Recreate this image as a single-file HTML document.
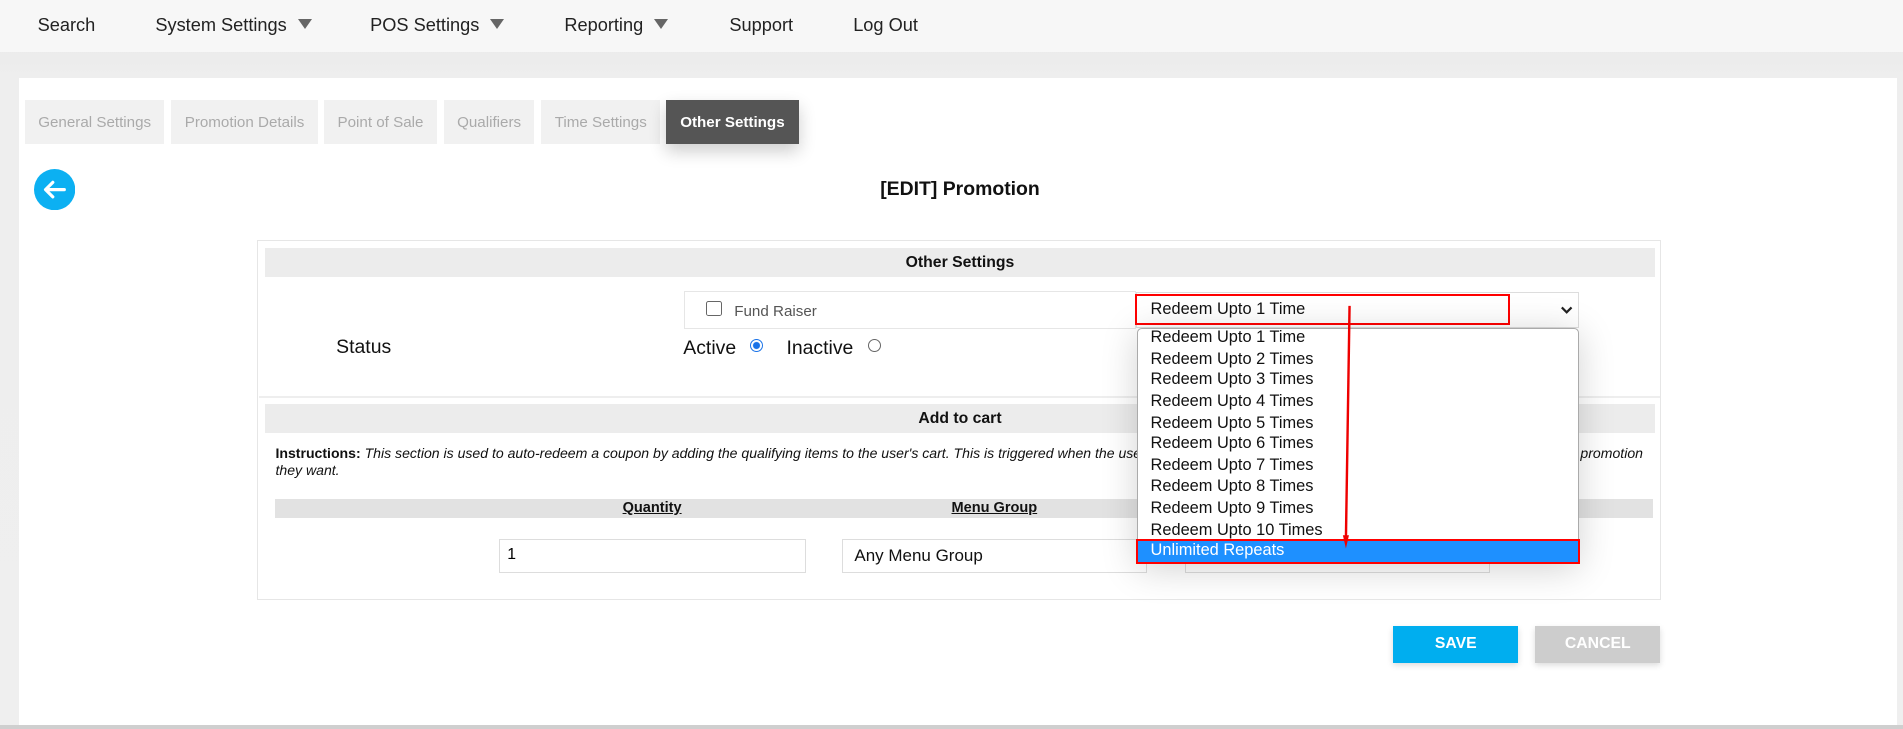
<!DOCTYPE html>
<html><head><meta charset="utf-8"><style>
html,body{margin:0;padding:0;}
body{width:1903px;height:729px;overflow:hidden;background:#ccc;font-family:"Liberation Sans",Arial,sans-serif;}
#w{position:relative;width:1568px;height:601px;zoom:1.21365;background:linear-gradient(#e6e6e6,#eeeeee 64px,#efefef);overflow:hidden;}
.a{position:absolute;white-space:nowrap;}
.nav{position:absolute;left:0;top:0;width:1568px;height:43px;background:#f7f7f7;}
.nav .a{font-size:15px;color:#222;top:12px;}
.tri{display:inline-block;width:0;height:0;border-left:6px solid transparent;border-right:6px solid transparent;border-top:9px solid #666;margin-left:9px;vertical-align:1px;}
.panel{position:absolute;left:16px;top:64px;width:1547px;height:533px;background:#fff;}
.tab{position:absolute;top:82px;height:37px;background:#f1f1f1;color:#aaa;font-size:12.5px;line-height:38px;text-align:center;}
.hdr{position:absolute;background:#ececec;font-weight:bold;font-size:13px;text-align:center;line-height:24px;color:#111;}
.opt{position:absolute;left:948px;font-size:13.5px;color:#111;}
.inp{position:absolute;border:1px solid #ddd;background:#fff;box-sizing:border-box;}
</style></head><body><div id="w">
<div class="nav">
<span class="a" style="left:31px">Search</span>
<span class="a" style="left:128px">System Settings<span class="tri"></span></span>
<span class="a" style="left:305px">POS Settings<span class="tri"></span></span>
<span class="a" style="left:465px">Reporting<span class="tri"></span></span>
<span class="a" style="left:601px">Support</span>
<span class="a" style="left:703px">Log Out</span>
</div>
<div class="panel"></div>
<div style="position:absolute;left:0;top:597px;width:1568px;height:4px;background:#cfcfcf"></div>
<div class="tab" style="left:21px;width:114px">General Settings</div>
<div class="tab" style="left:141px;width:121px">Promotion Details</div>
<div class="tab" style="left:267px;width:93px">Point of Sale</div>
<div class="tab" style="left:366px;width:74px">Qualifiers</div>
<div class="tab" style="left:446px;width:98px">Time Settings</div>
<div class="tab" style="left:549px;width:109px;background:#555;color:#fff;font-weight:bold;box-shadow:0 6px 14px rgba(0,0,0,.2)">Other Settings</div>
<svg class="a" style="left:28px;top:139px" width="34" height="34" viewBox="0 0 34 34"><circle cx="17" cy="17" r="17" fill="#0cb0f2"/><path d="M25 17H10M15.5 11l-6 6 6 6" stroke="#fff" stroke-width="2.6" fill="none" stroke-linecap="round" stroke-linejoin="round"/></svg>
<div class="a" style="left:0;width:1582px;text-align:center;top:147px;font-weight:bold;font-size:16px;color:#111">[EDIT] Promotion</div>
<div style="position:absolute;left:212px;top:198px;width:1155px;height:295px;border:1px solid #e6e6e6;background:#fff"></div>
<div class="hdr" style="left:218px;top:204px;width:1146px">Other Settings</div>
<div class="inp" style="left:564px;top:240px;width:372px;height:31px;border-color:#e6e6e6"></div>
<div style="position:absolute;left:582px;top:248px;width:11px;height:11px;border:1px solid #666;border-radius:2px;background:#fff"></div>
<span class="a" style="left:605px;top:250px;font-size:12.5px;color:#555">Fund Raiser</span>
<div class="inp" style="left:936px;top:241px;width:365px;height:29px"></div>
<span class="a" style="left:948px;top:247px;font-size:13.5px;color:#111">Redeem Upto 1 Time</span>
<svg class="a" style="left:1285px;top:251px" width="11" height="8" viewBox="0 0 11 8"><path d="M1.5 2l4 4 4-4" stroke="#222" stroke-width="1.8" fill="none"/></svg>
<div style="position:absolute;left:935px;top:242px;width:309px;height:26px;border:2px solid #f00;box-sizing:border-box"></div>
<span class="a" style="left:277px;top:277px;font-size:16px;color:#111">Status</span>
<span class="a" style="left:563px;top:278px;font-size:16px;color:#111">Active</span>
<div style="position:absolute;left:618px;top:279px;width:9px;height:9px;border:1.5px solid #1a73e8;border-radius:50%;background:radial-gradient(circle,#1a73e8 2.6px,#fff 3.2px)"></div>
<span class="a" style="left:648px;top:278px;font-size:16px;color:#111">Inactive</span>
<div style="position:absolute;left:715px;top:279px;width:9px;height:9px;border:1px solid #666;border-radius:50%;background:#fff"></div>
<div style="position:absolute;left:213px;top:326px;width:1155px;height:2px;background:#eee"></div>
<div class="hdr" style="left:218px;top:333px;width:1146px">Add to cart</div>
<div class="a" style="left:227px;top:367px;font-size:11.6px;line-height:14px;color:#111"><b>Instructions:</b> <i>This section is used to auto-redeem a coupon by adding the qualifying items to the user's cart. This is triggered when the user adds the qualifying items to their cart without selecting the coupon or promotion</i><br><i>they want.</i></div>
<div style="position:absolute;left:227px;top:411px;width:1135px;height:16px;background:#e2e2e2"></div>
<span class="a" style="left:513px;top:412px;font-size:12px;font-weight:bold;text-decoration:underline;color:#111">Quantity</span>
<span class="a" style="left:784px;top:412px;font-size:12px;font-weight:bold;text-decoration:underline;color:#111">Menu Group</span>
<div class="inp" style="left:411px;top:444px;width:253px;height:28px"></div>
<span class="a" style="left:418px;top:450px;font-size:13px">1</span>
<div class="inp" style="left:694px;top:444px;width:251px;height:28px"></div>
<span class="a" style="left:704px;top:450px;font-size:14px;color:#111">Any Menu Group</span>
<div class="inp" style="left:976px;top:444px;width:252px;height:28px"></div>
<div style="position:absolute;left:1257px;top:460px;width:4px;height:4px;background:#3a3;border-radius:50%"></div>
<div style="position:absolute;left:937px;top:270px;width:364px;height:195px;background:#fff;border:1px solid #aaa;border-radius:4px;box-sizing:border-box;box-shadow:0 4px 30px rgba(0,0,0,.18)"></div>
<span class="opt" style="top:270px">Redeem Upto 1 Time</span>
<span class="opt" style="top:288px">Redeem Upto 2 Times</span>
<span class="opt" style="top:305px">Redeem Upto 3 Times</span>
<span class="opt" style="top:323px">Redeem Upto 4 Times</span>
<span class="opt" style="top:341px">Redeem Upto 5 Times</span>
<span class="opt" style="top:358px">Redeem Upto 6 Times</span>
<span class="opt" style="top:376px">Redeem Upto 7 Times</span>
<span class="opt" style="top:393px">Redeem Upto 8 Times</span>
<span class="opt" style="top:411px">Redeem Upto 9 Times</span>
<span class="opt" style="top:429px">Redeem Upto 10 Times</span>
<div style="position:absolute;left:936px;top:444px;width:366px;height:21px;background:#1e90ff;border:2px solid #f00;box-sizing:border-box"></div>
<span class="opt" style="top:446px;color:#fff">Unlimited Repeats</span>
<svg class="a" style="left:1100px;top:248px" width="20" height="210" viewBox="0 0 20 210"><path d="M12 4L9 196" stroke="#e00" stroke-width="2" fill="none"/><path d="M6.5 193l2.5 11 2.5-11z" fill="#e00"/></svg>
<div style="position:absolute;left:1148px;top:516px;width:103px;height:30px;background:#00aeef;color:#fff;font-weight:bold;font-size:13px;line-height:30px;text-align:center;box-shadow:0 2px 5px rgba(0,0,0,.15)">SAVE</div>
<div style="position:absolute;left:1265px;top:516px;width:103px;height:30px;background:#cdcdcd;color:#fff;font-weight:bold;font-size:13px;line-height:30px;text-align:center;box-shadow:0 2px 5px rgba(0,0,0,.15)">CANCEL</div>
</div></body></html>
